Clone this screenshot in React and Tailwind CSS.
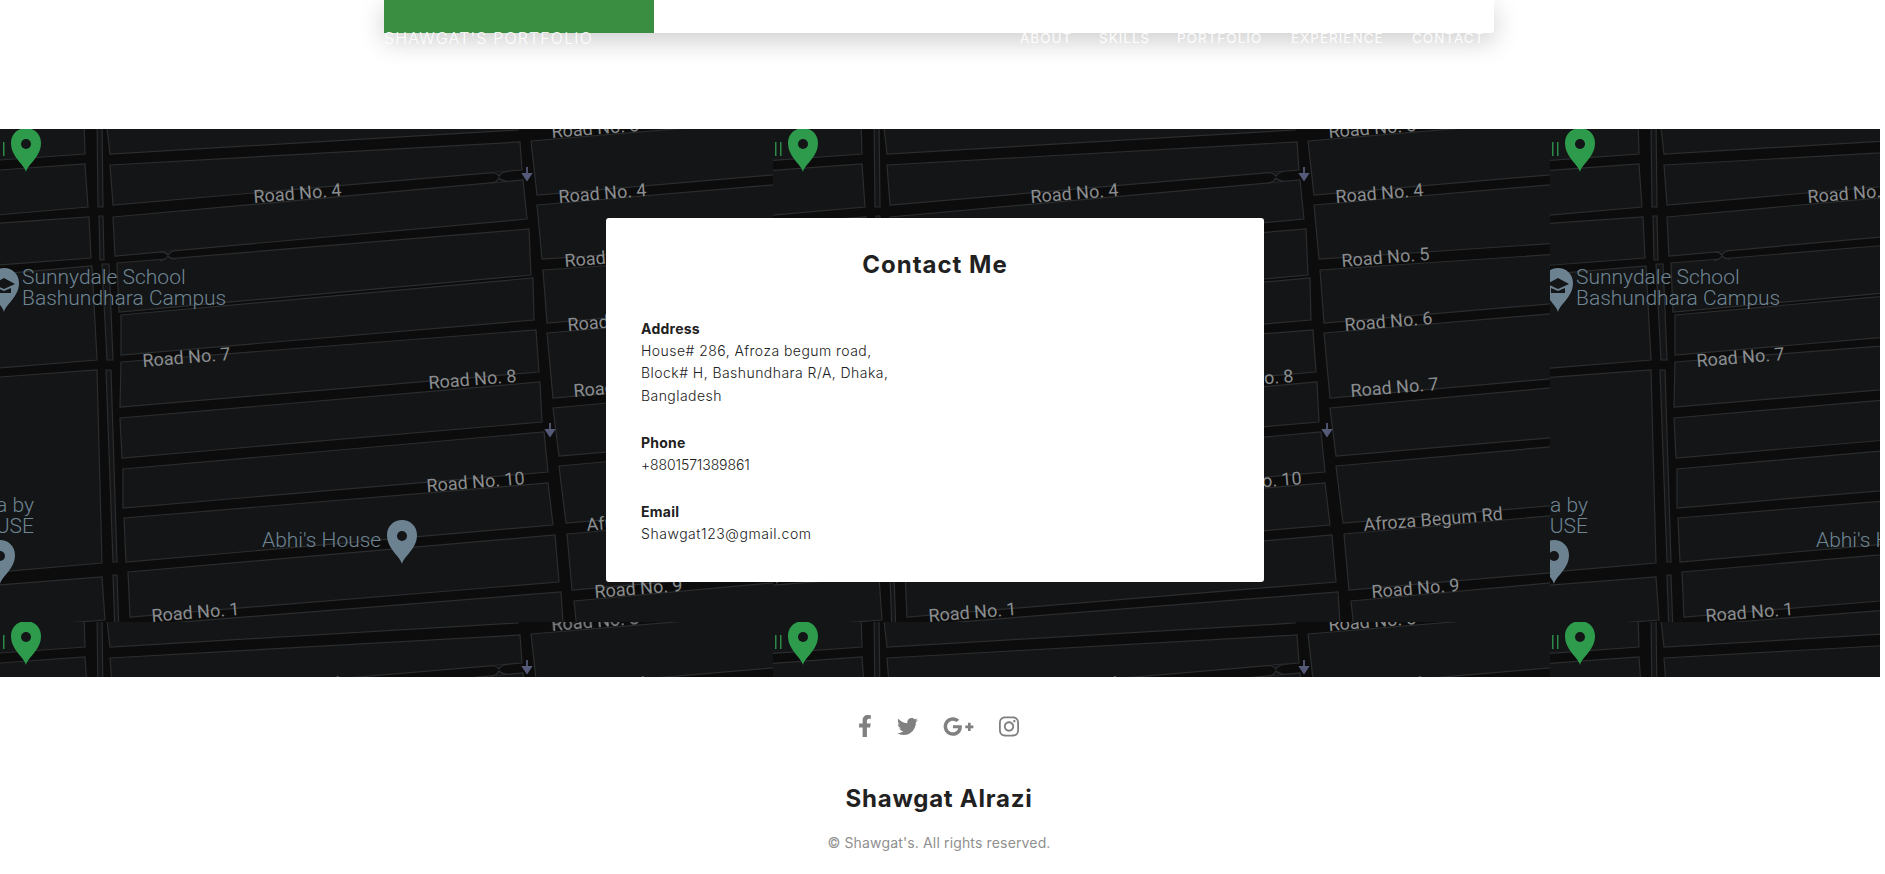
import React from "react";
import { FaFacebookF, FaTwitter, FaGooglePlusG, FaInstagram } from "react-icons/fa";

// map tile is 777x493, repeated from x=-4
const TILE_W = 777;
const TILE_H = 493;

const blocks = [
  // left strip
  "-10,-10 88,-10 89,25 -10,32",
  "-10,42 89,35 92,78 -10,87",
  "-10,95 93,88 95,129 -10,137",
  "-10,146 96,137 101,231 -10,240",
  "-10,249 101,241 106,434 -10,444",
  "-10,457 106,448 109,491 -10,500",
  // medians
  "101,-10 106,-10 107,78 102,78",
  "103,87 107,87 108,131 104,131",
  "106,135 113,135 117,231 111,231",
  "110,241 115,241 121,433 117,433",
  "117,446 121,446 123,505 119,505",
  // middle column
  "110,-10 521,-10 522,1 114,25",
  "114,36 524,13 526,41 117,76",
  "117,88 527,51 531,90 119,127",
  "121,134 533,100 535,146 123,183",
  "125,186 537,149 538,191 125,226",
  "125,233 540,201 543,243 124,278",
  "124,289 544,253 546,293 126,329",
  "127,340 548,303 552,343 127,379",
  "128,389 552,354 557,396 130,433",
  "132,443 559,406 563,453 134,488",
  "135,497 565,463 568,510 138,510",
  // right column
  "535,12 787,-9 787,45 541,66",
  "541,76 787,55 787,114 546,130",
  "547,141 787,125 787,174 551,194",
  "551,204 787,184 787,249 557,269",
  "557,279 787,258 787,308 563,327",
  "563,337 787,317 787,376 570,394",
  "571,405 787,386 787,443 576,461",
  "578,472 787,453 787,510 582,510",
];

const roadLabels = [
  { text: "Road No. 3", x: 556, y: 9 },
  { text: "Road No. 4", x: 258, y: 74 },
  { text: "Road No. 4", x: 563, y: 74 },
  { text: "Road No. 5", x: 569, y: 138 },
  { text: "Road No. 6", x: 572, y: 202 },
  { text: "Road No. 7", x: 578, y: 268 },
  { text: "Road No. 7", x: 147, y: 238 },
  { text: "Road No. 8", x: 433, y: 260 },
  { text: "Road No. 10", x: 431, y: 363 },
  { text: "Road No. 1", x: 156, y: 493 },
  { text: "Road No. 9", x: 599, y: 469 },
  { text: "Afroza Begum Rd", x: 591, y: 402 },
];

const navItems = [
  { label: "ABOUT", w: "w-[79px]" },
  { label: "SKILLS", w: "w-[78px]" },
  { label: "PORTFOLIO", w: "w-[114px]" },
  { label: "EXPERIENCE", w: "w-[121px]" },
  { label: "CONTACT", w: "w-[70px]" },
];

function Pin({ x, y, color }) {
  return (
    <g transform={`translate(${x} ${y})`}>
      <path
        d="M0 28C-2 20-15 13-15-1C-15-10-8-16 0-16C8-16 15-10 15-1C15 13 2 20 0 28Z"
        fill={color}
      />
    </g>
  );
}

function MapTile({ x, y }) {
  return (
    <svg x={x} y={y} width={TILE_W} height={TILE_H} viewBox={`0 0 ${TILE_W} ${TILE_H}`}>
      <rect width={TILE_W} height={TILE_H} fill="#0c0c0c" />
      {blocks.map((points) => (
        <polygon key={points} points={points} fill="#131517" stroke="#2b2d2f" strokeWidth="1.2" />
      ))}

      {/* pinched spots in the roads */}
      <g fill="#131517" stroke="#2b2d2f" strokeWidth="1.2">
        <path d="M495 43.5Q500 43.5 503 47Q506 43 511 42.5" />
        <path d="M495 54Q500 54 503 49Q506 52 511 52" />
        <path d="M164 123Q169 122.5 172 126Q175 122 180 121" />
        <path d="M164 132Q169 131 172 127Q175 130 180 130" />
      </g>

      {/* one-way arrows */}
      <path d="M531 38v8M527 45h8l-4 6z" stroke="#555a78" strokeWidth="1.8" fill="#555a78" />
      <path d="M554 294v8M550 301h8l-4 6z" stroke="#555a78" strokeWidth="1.8" fill="#555a78" />

      {roadLabels.map((label) => (
        <text
          key={label.text + label.x}
          x={label.x}
          y={label.y}
          transform={`rotate(-4.6 ${label.x} ${label.y})`}
          fontFamily="Roboto, sans-serif"
          fontSize="18"
          fill="#8a8d8f"
        >
          {label.text}
        </text>
      ))}

      <g fontFamily="Roboto, sans-serif" fontSize="21" fill="#6f8593" fontWeight="300">
        <text x="26" y="155">Sunnydale School</text>
        <text x="26" y="176">Bashundhara Campus</text>
        <text x="266" y="418">Abhi's House</text>
        <text x="38" y="383" textAnchor="end">a by</text>
        <text x="38" y="404" textAnchor="end">USE</text>
      </g>

      <rect x="2" y="13" width="1.5" height="14" fill="#2c8a47" />
      <rect x="7" y="13" width="1.5" height="14" fill="#2c8a47" />
      <Pin x={30} y={15} color="#2e9a4c" />
      <circle cx="30" cy="15" r="5" fill="#131517" />

      <Pin x={8} y={155} color="#6d8290" />
      <path d="M-3 155l11-6 11 6-11 5zM1 159v5h14v-5l-7 3z" fill="#131517" />

      <Pin x={4} y={427} color="#6d8290" />
      <circle cx="4" cy="427" r="5" fill="#131517" />

      <Pin x={406} y={407} color="#6d8290" />
      <circle cx="406" cy="407" r="5" fill="#131517" />
    </svg>
  );
}

function MapBackground() {
  const tiles = [];
  for (let row = 0; row < 2; row++) {
    for (let col = 0; col < 3; col++) {
      tiles.push({ x: -4 + col * TILE_W, y: row * TILE_H });
    }
  }
  return (
    <svg className="absolute inset-0 blur-[0.3px]" width="1880" height="548">
      {tiles.map((tile) => (
        <MapTile key={`${tile.x}-${tile.y}`} x={tile.x} y={tile.y} />
      ))}
    </svg>
  );
}

function ContactBlock({ title, lines, className, lineClass = "tracking-[0.45px]" }) {
  return (
    <div className={className}>
      <h4 className="text-[14px] leading-[22px] font-bold text-[#212121] tracking-[0.25px]">{title}</h4>
      {lines.map((line) => (
        <p key={line} className={`text-[14px] leading-[22.4px] font-light text-[#212121] ${lineClass}`}>
          {line}
        </p>
      ))}
    </div>
  );
}

export default function App() {
  return (
    <div className="w-[1880px] bg-white [font-family:Inter,sans-serif]">
      <header className="relative w-[1110px] h-[33px] ml-[384px] bg-white rounded-br-[3px] shadow-[0_8px_26px_rgba(0,0,0,0.2)]">
        <div className="w-[270px] h-full bg-[#3a8e41]" />
        <div className="absolute top-[28px] left-0 w-[1110px] flex items-center justify-between text-white/90">
          <span className="text-[16px] leading-5 tracking-[1.15px] font-light">SHAWGAT'S PORTFOLIO</span>
          <nav className="flex mr-[12px]">
            {navItems.map((item) => (
              <a key={item.label} className={`${item.w} text-[13.5px] leading-5 tracking-[1px]`}>
                {item.label}
              </a>
            ))}
          </nav>
        </div>
      </header>

      <section className="relative mt-[96px] h-[548px] pt-[89px] overflow-hidden bg-[#131517]">
        <MapBackground />
        <div className="relative w-[658px] h-[364px] ml-[606px] bg-white rounded-[3px] pt-[31px] pl-[35px]">
          <h2 className="text-center text-[24px] leading-[32px] font-bold text-[#212121] tracking-[1px] pr-[35px]">
            Contact Me
          </h2>
          <ContactBlock
            className="mt-[37px]"
            title="Address"
            lines={["House# 286, Afroza begum road,", "Block# H, Bashundhara R/A, Dhaka,", "Bangladesh"]}
          />
          <ContactBlock className="mt-[25px]" title="Phone" lines={["+8801571389861"]} lineClass="tracking-[-0.1px]" />
          <ContactBlock className="mt-[24px]" title="Email" lines={["Shawgat123@gmail.com"]} lineClass="tracking-[0.55px]" />
        </div>
      </section>

      <footer className="w-[1878px] flex flex-col items-center pt-[37px] pb-[16px]">
        <div className="flex items-center gap-[25px] h-[24px] -ml-[2px] text-[#808080]">
          <FaFacebookF className="w-[14px] h-[22px]" />
          <FaTwitter className="w-[21px] h-[21px]" />
          <FaGooglePlusG className="w-[31px] h-[25px]" />
          <FaInstagram className="w-[20px] h-[23px]" />
        </div>
        <h3 className="mt-[45px] text-[24px] leading-8 font-bold text-[#212121] tracking-[0.75px]">Shawgat Alrazi</h3>
        <p className="mt-[18px] text-[14px] leading-5 text-[#8f8f8f] tracking-[0.15px]">
          © Shawgat's. All rights reserved.
        </p>
      </footer>
    </div>
  );
}
